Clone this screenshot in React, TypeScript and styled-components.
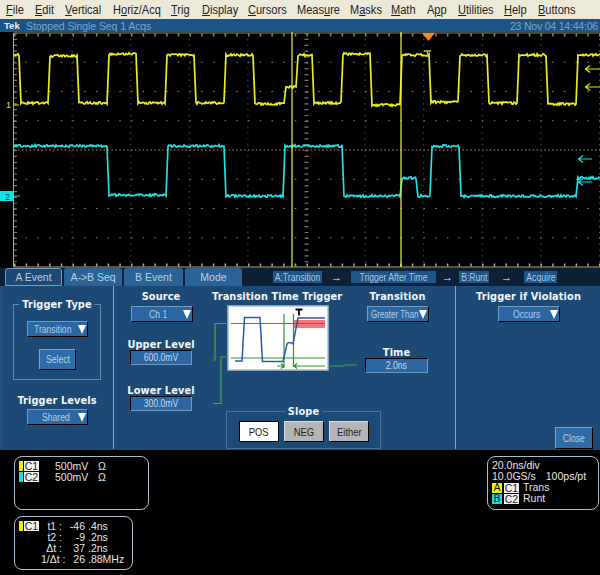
import { FC, ReactNode } from 'react';
import styled, { createGlobalStyle } from 'styled-components';

const GlobalStyle = createGlobalStyle`
    html, body {
        margin: 0;
        width: 600px;
        height: 575px;
        overflow: hidden;
        background: #000;
    }
    * { box-sizing: border-box; }
`;

const menuItems: [string, number, number][] = [
    ['File', 0, 29],
    ['Edit', 0, 30],
    ['Vertical', 0, 48],
    ['Horiz/Acq', 1, 58],
    ['Trig', 0, 31],
    ['Display', 0, 46],
    ['Cursors', 0, 49],
    ['Measure', 4, 53],
    ['Masks', 1, 41],
    ['Math', 0, 36],
    ['App', 1, 31],
    ['Utilities', 0, 46],
    ['Help', 0, 34],
    ['Buttons', 0, 42],
];

// each segment: [x where it ends, y level]
const yellowSegments: [number, number][] = [
    [19, 55], [48, 103], [77, 56], [107, 103], [136, 54], [165, 103], [194, 55], [224, 103],
    [253, 55], [284, 104], [296, 87], [312, 55], [341, 103], [370, 54], [400, 105], [429, 55],
    [458, 102], [487, 55], [517, 103], [546, 55], [576, 104], [600, 55],
];
const cyanSegments: [number, number][] = [
    [107, 146], [166, 195], [224, 146], [283, 196], [342, 146], [400, 196], [416, 178],
    [430, 196], [459, 146], [576, 196], [600, 178],
];

const tracePath = (segments: [number, number][], seed: number, startX: number) => {
    let state = seed;
    const noise = () => {
        state = (state * 16807) % 2147483647;
        return (state % 1000) / 1000 - 0.5;
    };
    let x = startX;
    let d = '';
    segments.forEach(([endX, level], i) => {
        const start = i === 0 ? x : x + 2;
        d += `${i === 0 ? 'M' : 'L'}${start} ${level + noise() * 2} `;
        for (let px = start + 1; px <= endX; px++) {
            d += `L${px} ${(level + noise() * 2.4).toFixed(1)} `;
        }
        x = endX;
    });
    return d;
};

const divX = Array.from({ length: 11 }, (_, i) => 13.5 + i * 58.6);
const divY = Array.from({ length: 9 }, (_, i) => 33 + i * 29.25);

const Scope: FC = () => (
    <ScreenSvg viewBox="0 32 600 236" width={600} height={236}>
        <line x1={13.5} y1={33} x2={600} y2={33} stroke="#8f8a70" />
        <line x1={13.5} y1={267} x2={600} y2={267} stroke="#b5ad88" />
        <line x1={13.5} y1={33} x2={13.5} y2={267} stroke="#b5ad88" />
        {divY.slice(1, 8).map(y => (
            <line key={y} x1={14} y1={y} x2={600} y2={y} stroke={y === 150 ? '#a89f80' : '#8c8c80'}
                strokeDasharray={y === 150 ? '1.5 2.4' : '1.5 10.2'} />
        ))}
        {divX.slice(1).map(x => (
            <line key={x} x1={x} y1={33} x2={x} y2={267} stroke="#5c5c50" strokeDasharray="1.2 4.65" />
        ))}
        <line x1={14} y1={265} x2={600} y2={265} stroke="#b5ad88" strokeWidth={3} strokeDasharray="1.5 10.2" />
        <line x1={14} y1={35} x2={600} y2={35} stroke="#8f8a70" strokeWidth={3} strokeDasharray="1.5 10.2" />
        <line x1={15.5} y1={33} x2={15.5} y2={267} stroke="#77735c" strokeWidth={3} strokeDasharray="1.2 4.65" />
        <line x1={306.5} y1={33} x2={306.5} y2={267} stroke="#77735c" strokeWidth={4} strokeDasharray="1.2 4.65" />
        <path d={tracePath(yellowSegments, 4211, 14)} fill="none" stroke="#ecec1e" strokeWidth={1.7} />
        <path d={tracePath(cyanSegments, 917, 14)} fill="none" stroke="#1fe0e4" strokeWidth={1.7} />
        <line x1={292} y1={32} x2={292} y2={267} stroke="#f2f23a" strokeWidth={1.2} />
        <line x1={401} y1={32} x2={401} y2={267} stroke="#f2f23a" strokeWidth={1.2} />
        <polygon points="422,33 435,33 428.5,41" fill="#f08a1d" />
        <path d="M424 51 H431 M427.5 51 V57" stroke="#c9c24a" strokeWidth={1.4} fill="none" />
        <MarkerText x={6} y={108} fill="#e8e820">1</MarkerText>
        <line x1={14} y1={105} x2={19} y2={105} stroke="#ecec1e" />
        <rect x={0} y={191} width={14} height={10} fill="#14e0e8" />
        <MarkerText x={5} y={200} fill="#04505a">2</MarkerText>
        <path d="M14 196 H20" stroke="#1fe0e4" />
        <path d="M586 69 H600 M590 65.5 L585.5 69 L590 72.5 M586 87 H600 M590 83.5 L585.5 87 L590 90.5"
            stroke="#e4e420" strokeWidth={1.2} fill="none" />
        <path d="M579 159 H592 M583 155.5 L578.5 159 L583 162.5 M579 182 H592 M583 178.5 L578.5 182 L583 185.5"
            stroke="#1fe0e4" strokeWidth={1.2} fill="none" />
    </ScreenSvg>
);

const TransitionDiagram: FC = () => (
    <DiagramSvg viewBox="205 304 160 102" width={160} height={102}>
        <rect x={228} y={306} width={100} height={64} fill="#fff" stroke="#a7bed2" strokeWidth={1.5} />
        <rect x={294} y={320} width={31} height={8} fill="#f4767a" />
        <g stroke="#2b962e" strokeWidth={1.2} fill="none">
            <path d="M231 323.5 H325 M231 358 H325 M284 314 V368 M293.5 314 V367" />
            <path d="M277 366 H284 M281 363.5 L284 366 L281 368.5 M294 366 H325 M297 363.5 L294 366 L297 368.5" />
        </g>
        <path d="M235 361 H242 L244.5 317.5 H260 L262.5 361.5 H283 L287 344 Q289 341 293 344 L298 318 H325"
            fill="none" stroke="#2858a8" strokeWidth={1.5} />
        <path d="M295.5 309.5 H302.5 M299 309.5 V315.5" stroke="#000" strokeWidth={1.8} />
        <g stroke="#3fa943" strokeWidth={1.2} fill="none">
            <path d="M226 323.5 H215 V360 H213" />
            <path d="M228 357 H221 V403.5 H213" />
            <path d="M328 366 H343 L345 365 H357" />
        </g>
    </DiagramSvg>
);

const Dropdown: FC<{ label: string; width: number; indent: number; squeeze?: number }> = ({
    label,
    width,
    indent,
    squeeze = 0.86,
}) => (
    <DropdownBox $width={width} $indent={indent}>
        <DropdownLabel $squeeze={squeeze}>{label}</DropdownLabel>
        <Caret />
    </DropdownBox>
);

const Chip: FC<{ color: string; children: ReactNode }> = ({ color, children }) => (
    <ChipWrap>
        <ChipBar $color={color} />
        <ChipName>{children}</ChipName>
    </ChipWrap>
);

const App: FC = () => (
    <Page>
        <GlobalStyle />
        <MenuBar>
            {menuItems.map(([label, idx, width]) => (
                <MenuItem key={label} $width={width}>
                    {label.slice(0, idx)}
                    <u>{label[idx]}</u>
                    {label.slice(idx + 1)}
                </MenuItem>
            ))}
        </MenuBar>
        <StatusBar>
            <TekLabel>Tek</TekLabel>
            <StatusText>Stopped Single Seq 1 Acqs</StatusText>
            <StatusDate>23 Nov 04 14:44:06</StatusDate>
        </StatusBar>
        <Scope />
        <TabRow>
            <Tab $active $width={57}>A Event</Tab>
            <Tab $width={58}>A-&gt;B Seq</Tab>
            <Tab $width={59}>B Event</Tab>
            <Tab $width={57}>Mode</Tab>
            <SeqBar>
                <SeqChip $width={49}><Narrow>A:Transition</Narrow></SeqChip>
                <SeqArrow $width={29}>→</SeqArrow>
                <SeqChip $width={85}><Narrow>Trigger After Time</Narrow></SeqChip>
                <SeqArrow $width={23}>→</SeqArrow>
                <SeqChip $width={30}><Narrow>B:Runt</Narrow></SeqChip>
                <SeqArrow $width={35}>→</SeqArrow>
                <SeqChip $width={33}><Narrow>Acquire</Narrow></SeqChip>
            </SeqBar>
        </TabRow>
        <Panel>
            <LeftColumn>
                <TypeGroup>
                    <GroupLegend>Trigger Type</GroupLegend>
                    <Dropdown label="Transition" width={60} indent={6} />
                    <PanelButton $width={36} $height={20}><Narrow>Select</Narrow></PanelButton>
                </TypeGroup>
                <LevelsBlock>
                    <Title>Trigger Levels</Title>
                    <Dropdown label="Shared" width={60} indent={14} />
                </LevelsBlock>
            </LeftColumn>
            <CenterColumn>
                <SourceColumn>
                    <Field>
                        <Title>Source</Title>
                        <Dropdown label="Ch 1" width={61} indent={17} />
                    </Field>
                    <ValueField $top={18}>
                        <Title>Upper Level</Title>
                        <ValueBox $width={62}><Narrow>600.0mV</Narrow></ValueBox>
                    </ValueField>
                    <ValueField $top={20}>
                        <Title>Lower Level</Title>
                        <ValueBox $width={62}><Narrow>300.0mV</Narrow></ValueBox>
                    </ValueField>
                </SourceColumn>
                <DiagramColumn>
                    <DiagramTitle>Transition Time Trigger</DiagramTitle>
                    <TransitionDiagram />
                </DiagramColumn>
                <TransitionColumn>
                    <Field>
                        <Title>Transition</Title>
                        <Dropdown label="Greater Than" width={61} indent={3} squeeze={0.8} />
                    </Field>
                    <ValueField $top={26} $left={-2}>
                        <Title>Time</Title>
                        <ValueBox $width={63}><Narrow>2.0ns</Narrow></ValueBox>
                    </ValueField>
                </TransitionColumn>
                <SlopeGroup>
                    <GroupLegend>Slope</GroupLegend>
                    <SlopeButton $on><Narrow>POS</Narrow></SlopeButton>
                    <SlopeButton><Narrow>NEG</Narrow></SlopeButton>
                    <SlopeButton><Narrow>Either</Narrow></SlopeButton>
                </SlopeGroup>
            </CenterColumn>
            <RightColumn>
                <Field>
                    <Title>Trigger if Violation</Title>
                    <Dropdown label="Occurs" width={61} indent={14} />
                </Field>
                <CloseSlot>
                    <PanelButton $width={37} $height={21}><Narrow>Close</Narrow></PanelButton>
                </CloseSlot>
            </RightColumn>
        </Panel>
        <Readouts>
            <ReadoutStack>
                <Readout $width={135}>
                    <ChannelRow>
                        <Chip color="#f0f000">C1</Chip>
                        <Volts>500mV</Volts>
                        <span>Ω</span>
                    </ChannelRow>
                    <ChannelRow>
                        <Chip color="#14e0f0">C2</Chip>
                        <Volts>500mV</Volts>
                        <span>Ω</span>
                    </ChannelRow>
                </Readout>
                <Readout $width={119}>
                    <CursorGrid>
                        <Chip color="#f0f000">C1</Chip>
                        <CursorLabel>t1 :</CursorLabel>
                        <CursorInt>-46</CursorInt><CursorFrac>.4ns</CursorFrac>
                        <span />
                        <CursorLabel>t2 :</CursorLabel>
                        <CursorInt>-9</CursorInt><CursorFrac>.2ns</CursorFrac>
                        <span />
                        <CursorLabel>Δt :</CursorLabel>
                        <CursorInt>37</CursorInt><CursorFrac>.2ns</CursorFrac>
                        <span />
                        <CursorLabel>1/Δt :</CursorLabel>
                        <CursorInt>26</CursorInt><CursorFrac>.88MHz</CursorFrac>
                    </CursorGrid>
                </Readout>
            </ReadoutStack>
            <TimebaseReadout $width={112}>
                <span>20.0ns/div</span>
                <RateRow><span>10.0GS/s</span><span>100ps/pt</span></RateRow>
                <EventRow>
                    <EventTag $color="#f0f000">A</EventTag>
                    <ChipName>C1</ChipName>
                    <span>Trans</span>
                </EventRow>
                <EventRow>
                    <EventTag $color="#14d8e8">B</EventTag>
                    <ChipName>C2</ChipName>
                    <span>Runt</span>
                </EventRow>
            </TimebaseReadout>
        </Readouts>
    </Page>
);

export default App;

const Page = styled.div`
    display: flex;
    flex-direction: column;
    width: 600px;
    height: 575px;
    background: #000;
    font-family: 'Liberation Sans', Arial, sans-serif;
`;
const MenuBar = styled.div`
    display: flex;
    align-items: center;
    height: 19px;
    padding-left: 6px;
    background: #ece9d8;
    color: #222;
    font-size: 12px;
`;
const MenuItem = styled.span<{ $width: number }>`
    width: ${({ $width }) => $width}px;
    white-space: nowrap;
    transform: scaleX(0.92);
    transform-origin: left center;
`;
const StatusBar = styled.div`
    display: flex;
    align-items: center;
    height: 13px;
    padding: 0 2px 0 4px;
    background: #1b5487;
    color: #7fa5c8;
    font-size: 10.5px;
`;
const TekLabel = styled.span`
    width: 22px;
    color: #e8f0f6;
    font-size: 9.5px;
    font-weight: bold;
`;
const StatusText = styled.span`
    letter-spacing: -0.08px;
`;
const StatusDate = styled.span`
    margin-left: auto;
    letter-spacing: -0.2px;
`;
const ScreenSvg = styled.svg`
    display: block;
    flex: none;
    background: #000;
`;
const MarkerText = styled.text`
    font-family: 'Liberation Sans', Arial, sans-serif;
    font-size: 9px;
`;
const TabRow = styled.div`
    display: flex;
    align-items: flex-end;
    gap: 2px;
    height: 18px;
    padding-left: 5px;
    background: #0d2136;
`;
const Tab = styled.div<{ $active?: boolean; $width: number }>`
    display: flex;
    align-items: center;
    justify-content: center;
    width: ${({ $width }) => $width}px;
    height: 18px;
    border-radius: 3px 3px 0 0;
    background: ${({ $active }) => ($active ? '#1c4a75' : '#2a6396')};
    border: ${({ $active }) => ($active ? '1px solid #6f9cc0' : 'none')};
    color: #b9d0e3;
    font-size: 10.5px;
`;
const SeqBar = styled.div`
    display: flex;
    margin-left: 29px;
`;
const SeqChip = styled.div<{ $width: number }>`
    display: flex;
    align-items: center;
    justify-content: center;
    width: ${({ $width }) => $width}px;
    height: 12px;
    margin-bottom: 3px;
    background: #1f5688;
    color: #a9c6de;
    font-size: 10px;
`;
const SeqArrow = styled.span<{ $width: number }>`
    width: ${({ $width }) => $width}px;
    margin-bottom: 3px;
    color: #f0f4f8;
    font-size: 11px;
    font-weight: bold;
    line-height: 12px;
    text-align: center;
`;
const Narrow = styled.span`
    display: inline-block;
    white-space: nowrap;
    transform: scaleX(0.86);
`;
const Panel = styled.div`
    display: grid;
    grid-template-columns: 111px 342px 144px;
    flex: none;
    height: 164px;
    padding-bottom: 1px;
    background: #1c4a75;
    border-left: 3px solid #234f7a;
`;
const LeftColumn = styled.div`
    display: flex;
    flex-direction: column;
    align-items: center;
    padding: 18px 12px 0 10px;
    border-right: 1px solid #8ba6bd;
`;
const Title = styled.div`
    color: #f2f6fa;
    font-family: 'DejaVu Sans', sans-serif;
    font-size: 9.8px;
    font-weight: bold;
    letter-spacing: 0.1px;
    line-height: 12px;
    white-space: nowrap;
`;
const GroupLegend = styled(Title)`
    position: absolute;
    top: -6px;
    left: 50%;
    transform: translateX(-50%);
    padding: 0 3px;
    background: #1c4a75;
`;
const TypeGroup = styled.div`
    position: relative;
    display: flex;
    flex-direction: column;
    align-items: center;
    gap: 13px;
    width: 88px;
    height: 76px;
    padding-top: 16px;
    border: 1px solid #5f88ab;
`;
const LevelsBlock = styled.div`
    display: flex;
    flex-direction: column;
    align-items: center;
    gap: 2px;
    margin-top: 15px;
`;
const DropdownBox = styled.div<{ $width: number; $indent: number }>`
    display: flex;
    align-items: center;
    width: ${({ $width }) => $width}px;
    height: 15px;
    padding: 0 1px 0 ${({ $indent }) => $indent}px;
    background: #2b67a2;
    border-left: 1px solid #6e9ac4;
    border-top: 1px solid #6e9ac4;
    box-shadow: 1px 1px 0 #000;
    color: #b7cde2;
    font-size: 10px;
`;
const DropdownLabel = styled.span<{ $squeeze: number }>`
    flex: 1;
    min-width: 0;
    white-space: nowrap;
    transform: scaleX(${({ $squeeze }) => $squeeze});
    transform-origin: left center;
`;
const Caret = styled.i`
    flex: none;
    width: 0;
    height: 0;
    border-left: 4px solid transparent;
    border-right: 4px solid transparent;
    border-top: 9px solid #fff;
`;
const PanelButton = styled.div<{ $width: number; $height: number }>`
    display: flex;
    align-items: center;
    justify-content: center;
    width: ${({ $width }) => $width}px;
    height: ${({ $height }) => $height}px;
    background: #2f6ba6;
    border-left: 1px solid #77a2ca;
    border-top: 1px solid #77a2ca;
    box-shadow: 1px 1px 0 #000;
    color: #b9d0e6;
    font-size: 10px;
`;
const CenterColumn = styled.div`
    display: grid;
    grid-template-columns: 92px 158px 1fr;
    grid-template-rows: 118px 1fr;
    padding-top: 5px;
    border-right: 1px solid #8ba6bd;
`;
const SourceColumn = styled.div`
    grid-row: 1 / 3;
    display: flex;
    flex-direction: column;
    align-items: center;
    padding-left: 2px;
`;
const Field = styled.div`
    display: flex;
    flex-direction: column;
    align-items: center;
    gap: 3px;
`;
const ValueField = styled(Field)<{ $top: number; $left?: number }>`
    gap: 0;
    margin: ${({ $top }) => $top}px 0 0 ${({ $left }) => $left ?? 0}px;
`;
const ValueBox = styled.div<{ $width: number }>`
    display: flex;
    align-items: center;
    justify-content: center;
    width: ${({ $width }) => $width}px;
    height: 15px;
    margin-top: -1px;
    background: #2b67a2;
    border-left: 1px solid #000;
    border-top: 1px solid #000;
    border-right: 1px solid #6e9ac4;
    border-bottom: 1px solid #6e9ac4;
    color: #c6d8e8;
    font-size: 10px;
`;
const DiagramColumn = styled.div`
    display: flex;
    flex-direction: column;
    align-items: center;
    gap: 1px;
`;
const DiagramTitle = styled(Title)`
    align-self: flex-start;
    margin-left: 6px;
`;
const DiagramSvg = styled.svg`
    display: block;
    flex: none;
`;
const TransitionColumn = styled.div`
    display: flex;
    flex-direction: column;
    align-items: flex-start;
    padding-left: 3px;
`;
const SlopeGroup = styled.div`
    position: relative;
    grid-column: 2 / 4;
    display: flex;
    justify-content: center;
    align-items: center;
    gap: 6px;
    width: 155px;
    height: 38px;
    margin: 2px 0 0 20px;
    padding-top: 2px;
    border: 1px solid #45739b;
`;
const SlopeButton = styled.div<{ $on?: boolean }>`
    display: flex;
    align-items: center;
    justify-content: center;
    width: 39px;
    height: 20px;
    background: ${({ $on }) => ($on ? '#fff' : '#b5b5b5')};
    border-left: 1px solid ${({ $on }) => ($on ? '#000' : '#ddd')};
    border-top: 1px solid ${({ $on }) => ($on ? '#000' : '#ddd')};
    box-shadow: 1px 1px 0 #000;
    color: #222;
    font-size: 11px;
`;
const RightColumn = styled.div`
    display: flex;
    flex-direction: column;
    align-items: flex-start;
    padding: 5px 0 1px 20px;
`;
const CloseSlot = styled.div`
    margin: auto 0 0 79px;
`;
const Readouts = styled.div`
    display: flex;
    justify-content: space-between;
    align-items: flex-start;
    flex: 1;
    padding: 6px 1px 0 14px;
    background: #000;
`;
const ReadoutStack = styled.div`
    display: flex;
    flex-direction: column;
    gap: 6px;
`;
const Readout = styled.div<{ $width: number }>`
    display: flex;
    flex-direction: column;
    width: ${({ $width }) => $width}px;
    height: 54px;
    padding: 4px 4px;
    border: 1px solid #a9bfd0;
    border-radius: 8px;
    color: #e4e4e4;
    font-size: 10.5px;
    line-height: 11px;
`;
const TimebaseReadout = styled(Readout)`
    padding-top: 3px;
`;
const ChannelRow = styled.div`
    display: flex;
`;
const ChipWrap = styled.span`
    display: inline-flex;
    width: 22px;
    height: 10px;
`;
const ChipBar = styled.span<{ $color: string }>`
    width: 4px;
    background: ${({ $color }) => $color};
`;
const ChipName = styled.span`
    display: inline-block;
    width: 15px;
    height: 10px;
    margin-left: 1px;
    background: #f2f2f2;
    color: #222;
    font-size: 10.5px;
    line-height: 10px;
    text-align: center;
`;
const Volts = styled.span`
    width: 43px;
    margin-left: 14px;
`;
const CursorGrid = styled.div`
    display: grid;
    grid-template-columns: 22px 21px 23px auto;
    grid-auto-rows: 11px;
`;
const CursorLabel = styled.span`
    text-align: right;
    white-space: nowrap;
    direction: rtl;
    unicode-bidi: plaintext;
`;
const CursorInt = styled.span`
    text-align: right;
`;
const CursorFrac = styled.span`
    margin-left: 3px;
`;
const RateRow = styled.div`
    display: flex;
    gap: 10px;
`;
const EventRow = styled.div`
    display: flex;
    align-items: center;
    gap: 1px;
    height: 11px;
    & > span:last-child { margin-left: 3px; }
`;
const EventTag = styled.span<{ $color: string }>`
    width: 10px;
    height: 10px;
    background: ${({ $color }) => $color};
    color: #111;
    font-size: 10px;
    line-height: 10px;
    text-align: center;
`;
